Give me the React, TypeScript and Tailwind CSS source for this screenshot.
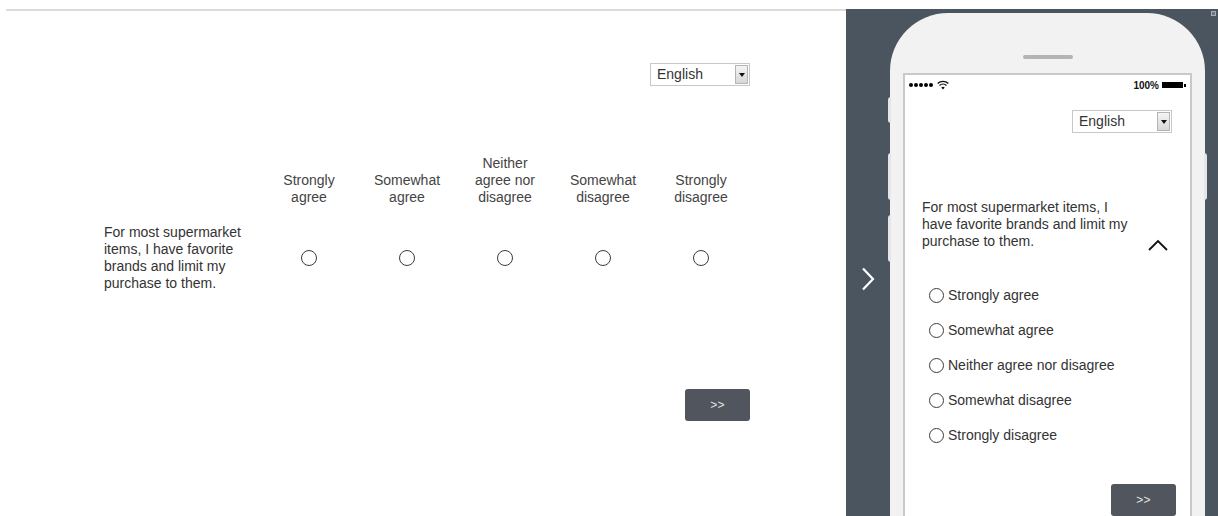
import { useState } from "react";

const SCALE: string[][] = [
  ["Strongly", "agree"],
  ["Somewhat", "agree"],
  ["Neither", "agree nor", "disagree"],
  ["Somewhat", "disagree"],
  ["Strongly", "disagree"],
];

const QUESTION = "For most supermarket items, I have favorite brands and limit my purchase to them.";

function Radio({ checked, size = "md" }: { checked: boolean; size?: "md" | "sm" }) {
  return (
    <span
      className={`inline-flex items-center justify-center rounded-full border-[1.5px] border-[#3c3c3c] bg-white ${
        size === "md" ? "w-[16px] h-[16px]" : "w-[15px] h-[15px]"
      }`}
    >
      {checked && <span className="w-[8px] h-[8px] rounded-full bg-[#3c3c3c]" />}
    </span>
  );
}

function LangSelect() {
  return (
    <div className="flex items-center h-[23px] w-[100px] border border-[#c8c8c8] bg-white pl-[6px] pr-px">
      <span className="flex-1 text-[14px] text-[#333]">English</span>
      <span className="flex items-center justify-center w-[13px] h-[19px] border border-[#b4b4b4] bg-gradient-to-b from-[#f4f4f4] to-[#d8d8d8]">
        <svg width="6" height="4" viewBox="0 0 6 4">
          <path d="M0 0h6L3 4z" fill="#111" />
        </svg>
      </span>
    </div>
  );
}

function NextButton() {
  return (
    <button className="w-[65px] h-[32px] rounded-[3px] bg-[#50555e] text-[12px] text-[#e4e4e4] tracking-wide">
      &gt;&gt;
    </button>
  );
}

function DesktopSurvey({ value, onPick }: { value: number; onPick: (i: number) => void }) {
  return (
    <div className="ml-[6px] w-[840px] border-t-2 border-[#dcdcdc] bg-white pl-[98px] pt-[52px]">
      <div className="w-[646px] flex flex-col">
        <div className="flex justify-end">
          <LangSelect />
        </div>

        <div className="grid grid-cols-[156px_repeat(5,98px)] mt-[69px] text-[14px] leading-[17px] text-[#444]">
          <div />
          {SCALE.map((lines) => (
            <div key={lines.join(" ")} className="flex flex-col justify-end items-center text-center">
              {lines.map((l) => (
                <span key={l}>{l}</span>
              ))}
            </div>
          ))}

          <p className="mt-[18px] pr-2 text-[#333]">{QUESTION}</p>
          {SCALE.map((lines, i) => (
            <button
              key={lines.join(" ")}
              onClick={() => onPick(i)}
              className="mt-[18px] flex items-center justify-center"
            >
              <Radio checked={value === i} />
            </button>
          ))}
        </div>

        <div className="flex justify-end mt-[97px]">
          <NextButton />
        </div>
      </div>
    </div>
  );
}

function StatusBar() {
  return (
    <div className="flex items-center justify-between h-[18px] px-[4px] pt-[2px]">
      <div className="flex items-center gap-[1px]">
        {[0, 1, 2, 3, 4].map((d) => (
          <span key={d} className="w-[4px] h-[4px] rounded-full bg-black" />
        ))}
        <svg width="12" height="10" viewBox="0 0 11 9" className="ml-[3px]">
          <path d="M0.6 3.2a7 7 0 0 1 9.8 0" stroke="#111" strokeWidth="1.2" fill="none" />
          <path d="M2.3 5a4.6 4.6 0 0 1 6.4 0" stroke="#111" strokeWidth="1.2" fill="none" />
          <path d="M5.5 8.6 3.9 6.8a2.3 2.3 0 0 1 3.2 0z" fill="#111" />
        </svg>
      </div>
      <div className="flex items-center gap-[3px]">
        <span className="text-[10px] font-bold text-[#111]">100%</span>
        <span className="w-[21px] h-[6px] bg-black" />
        <span className="w-[2px] h-[3px] bg-black -ml-[2px]" />
      </div>
    </div>
  );
}

function PhonePreview({ value, onPick }: { value: number; onPick: (i: number) => void }) {
  return (
    <div className="relative flex-1 bg-[#4b5560] flex">
      {/* tiny corner control */}
      <span className="absolute right-[2px] top-[2px] w-[5px] h-[5px] border border-[#aab] bg-[#6a7480]" />

      <div className="w-[44px] flex justify-center pt-[258px]">
        <svg width="16" height="24" viewBox="0 0 16 24">
          <path d="M3 1.5l10 10.5L3 22.5" stroke="#fff" strokeWidth="2.2" fill="none" />
        </svg>
      </div>

      <div className="relative w-[315px] mt-[4px] rounded-t-[58px] bg-[#f2f2f2] px-[13px] pt-[60px]">
        {/* side keys */}
        <span className="absolute -left-[2px] top-[84px] w-[3px] h-[26px] rounded-l bg-[#e6e6e6]" />
        <span className="absolute -left-[2px] top-[140px] w-[3px] h-[47px] rounded-l bg-[#e6e6e6]" />
        <span className="absolute -left-[2px] top-[202px] w-[3px] h-[47px] rounded-l bg-[#e6e6e6]" />
        <span className="absolute -right-[2px] top-[140px] w-[3px] h-[47px] rounded-r bg-[#e6e6e6]" />

        <span className="absolute left-1/2 -translate-x-1/2 top-[42px] w-[50px] h-[4px] rounded-full bg-[#b4b4b4]" />

        <div className="h-[460px] border-2 border-[#c9c9c9] bg-white flex flex-col">
          <StatusBar />

          <div className="flex justify-end pr-[18px] mt-[17px]">
            <LangSelect />
          </div>

          <div className="flex items-end justify-between mt-[66px] pl-[17px] pr-[22px] text-[14px] leading-[17px] text-[#333]">
            <p className="w-[216px]">{QUESTION}</p>
            <svg width="20" height="12" viewBox="0 0 20 12" className="-mb-[1px]">
              <path d="M1 11L10 2l9 9" stroke="#111" strokeWidth="1.8" fill="none" />
            </svg>
          </div>

          <div className="flex flex-col gap-[18px] mt-[37px] pl-[24px] text-[14px] leading-[17px] text-[#333]">
            {SCALE.map((lines, i) => (
              <button key={lines.join(" ")} onClick={() => onPick(i)} className="flex items-center gap-[4px] text-left">
                <Radio checked={value === i} size="sm" />
                <span>{lines.join(" ")}</span>
              </button>
            ))}
          </div>

          <div className="flex justify-end pr-[14px] mt-[40px]">
            <NextButton />
          </div>
        </div>
      </div>
    </div>
  );
}

export default function App() {
  const [answer, setAnswer] = useState(-1);

  return (
    <div className="w-[1218px] h-[516px] overflow-hidden bg-white pt-[9px] font-['Liberation_Sans',Arial,sans-serif]">
      <div className="flex h-full">
        <DesktopSurvey value={answer} onPick={setAnswer} />
        <PhonePreview value={answer} onPick={setAnswer} />
      </div>
    </div>
  );
}
